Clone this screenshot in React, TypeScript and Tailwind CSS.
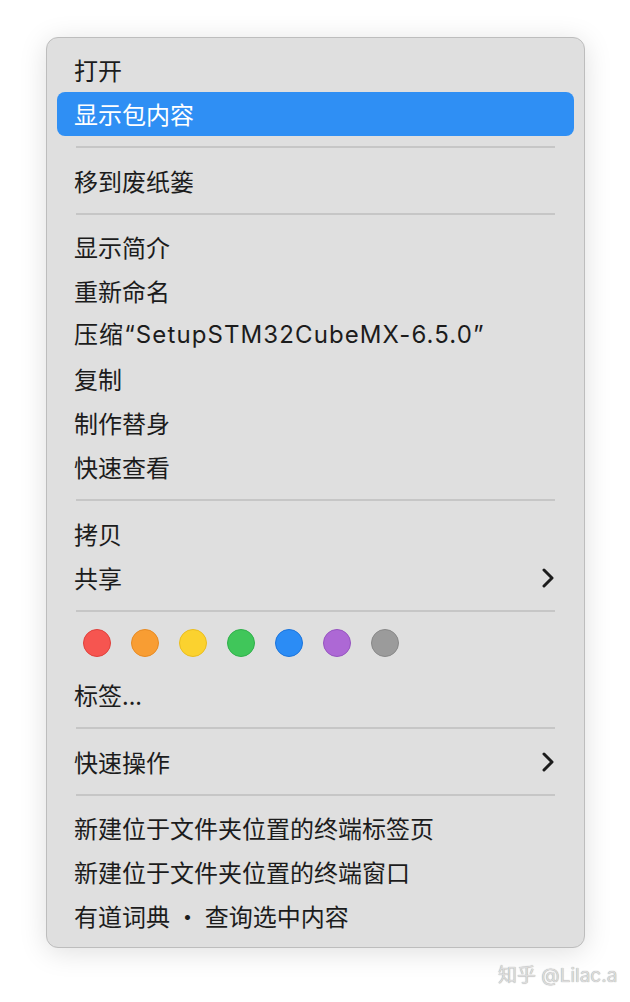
type Row =
  | { kind: "item"; label: string; active?: boolean; submenu?: boolean; latin?: boolean }
  | { kind: "sep" }
  | { kind: "tags" };

const ROWS: Row[] = [
  { kind: "item", label: "打开" },
  { kind: "item", label: "显示包内容", active: true },
  { kind: "sep" },
  { kind: "item", label: "移到废纸篓" },
  { kind: "sep" },
  { kind: "item", label: "显示简介" },
  { kind: "item", label: "重新命名" },
  { kind: "item", label: "压缩“SetupSTM32CubeMX-6.5.0”", latin: true },
  { kind: "item", label: "复制" },
  { kind: "item", label: "制作替身" },
  { kind: "item", label: "快速查看" },
  { kind: "sep" },
  { kind: "item", label: "拷贝" },
  { kind: "item", label: "共享", submenu: true },
  { kind: "sep" },
  { kind: "tags" },
  { kind: "item", label: "标签..." },
  { kind: "sep" },
  { kind: "item", label: "快速操作", submenu: true },
  { kind: "sep" },
  { kind: "item", label: "新建位于文件夹位置的终端标签页" },
  { kind: "item", label: "新建位于文件夹位置的终端窗口" },
  { kind: "item", label: "有道词典 • 查询选中内容" },
];

// tag dots — fill / ring
const TAGS = [
  "bg-[#f65550] border-[#e0403b]",
  "bg-[#f89d33] border-[#e78a22]",
  "bg-[#fbd22f] border-[#eabd1e]",
  "bg-[#40c65a] border-[#2fb04a]",
  "bg-[#2b8cf5] border-[#1b74dc]",
  "bg-[#ad68d5] border-[#9654c0]",
  "bg-[#9b9b9b] border-[#888888]",
];

function Chevron() {
  return (
    <svg width="12" height="20" viewBox="0 0 12 20" fill="none" stroke="#1c1c1c" strokeWidth="3" strokeLinecap="round" strokeLinejoin="round">
      <path d="M2 2 L10 10 L2 18" />
    </svg>
  );
}

export default function App() {
  return (
    <div
      className="relative w-[630px] h-[1002px] bg-white overflow-hidden"
      style={{ fontFamily: '"Noto Sans CJK SC", "Noto Sans", sans-serif' }}
    >
      <div className="pt-[37px] pl-[46px]">
        <div className="w-[539px] h-[911px] rounded-[12px] border border-[#bdbdbd] bg-[#dfdfdf] shadow-[0_4px_28px_rgba(0,0,0,0.13)] px-[10px] pt-[10px] pb-[9px] flex flex-col">
          {ROWS.map((row, i) => {
            if (row.kind === "sep")
              return (
                <div key={i} className="h-[22.5px] shrink-0 flex items-center px-[19px]">
                  <div className="h-[2px] w-full bg-[#c6c6c6]" />
                </div>
              );
            if (row.kind === "tags")
              return (
                <div key={i} className="h-[51px] shrink-0 flex items-start pt-[7px] gap-[20px] pl-[26px]">
                  {TAGS.map((c, j) => (
                    <span key={j} className={`w-[28px] h-[28px] rounded-full border ${c}`} />
                  ))}
                </div>
              );
            return (
              <div
                key={i}
                className={`h-[44px] shrink-0 flex items-center justify-between rounded-[8px] pl-[19px] pr-[20px] text-[24px] leading-none ${
                  row.active ? "bg-[#2f8ff4] text-white" : "text-[#1c1c1c]"
                } ${row.latin ? "tracking-[1.1px]" : ""}`}
                style={row.latin ? { fontFamily: 'Inter, "Noto Sans CJK SC", sans-serif' } : undefined}
              >
                <span className="-ml-[2px]">{row.label}</span>
                {row.submenu && <Chevron />}
              </div>
            );
          })}
        </div>
      </div>
      <div
        className="absolute left-[498px] top-[962px] text-[19px] text-[#dcdcdc]"
        style={{ fontFamily: 'Inter, "Noto Sans CJK SC", sans-serif', textShadow: "0 0 1px #8f8f8f" }}
      >
        知乎 @Lilac.a
      </div>
    </div>
  );
}
